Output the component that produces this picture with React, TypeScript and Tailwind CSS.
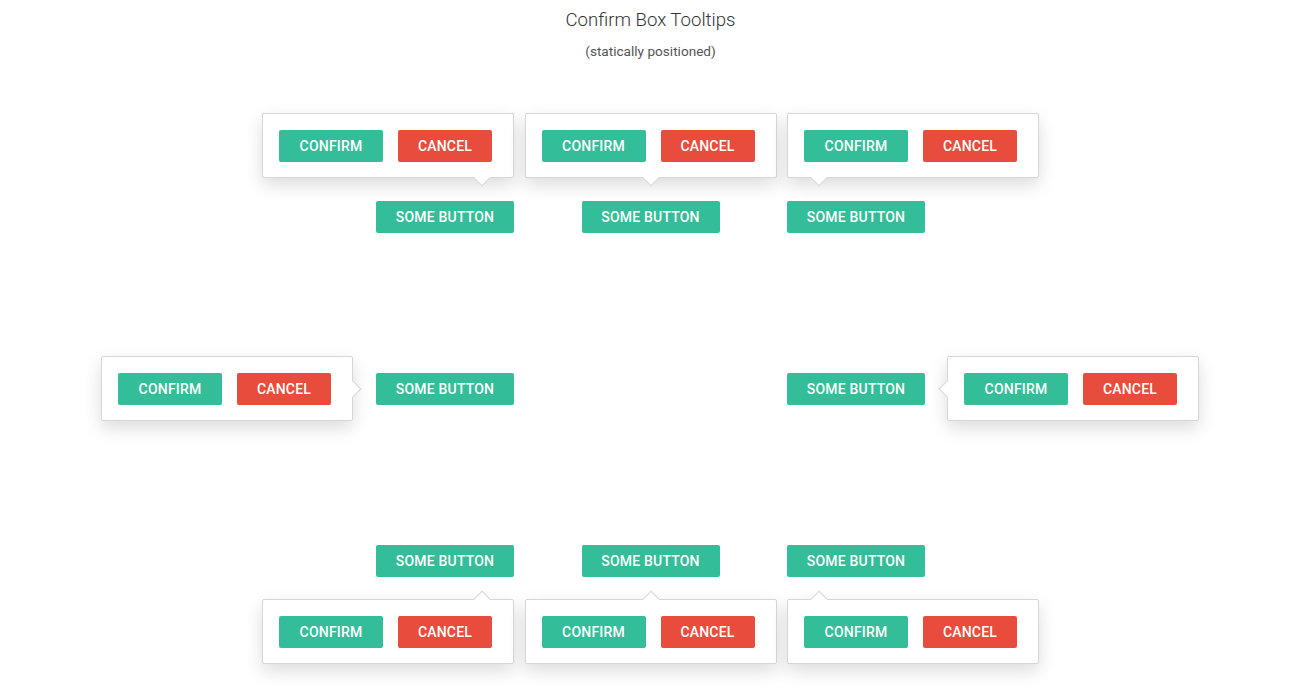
import React from "react";

type Placement =
  | "top-end"
  | "top"
  | "top-start"
  | "left"
  | "right"
  | "bottom-end"
  | "bottom"
  | "bottom-start";

const boxPos: Record<Placement, string> = {
  "top-end": "bottom-[calc(100%+23px)] right-0",
  top: "bottom-[calc(100%+23px)] left-1/2 -translate-x-1/2",
  "top-start": "bottom-[calc(100%+23px)] left-0",
  left: "right-[calc(100%+23px)] top-[-17px]",
  right: "left-[calc(100%+22px)] top-[-17px]",
  "bottom-end": "top-[calc(100%+22px)] right-0",
  bottom: "top-[calc(100%+22px)] left-1/2 -translate-x-1/2",
  "bottom-start": "top-[calc(100%+22px)] left-0",
};

const arrowPos: Record<Placement, string> = {
  "top-end": "-bottom-[7px] right-[25px] border-r border-b",
  top: "-bottom-[7px] left-1/2 -ml-[6px] border-r border-b",
  "top-start": "-bottom-[7px] left-[25px] border-r border-b",
  left: "-right-[7px] top-1/2 -mt-[6px] border-t border-r",
  right: "-left-[7px] top-1/2 -mt-[6px] border-b border-l",
  "bottom-end": "-top-[7px] right-[25px] border-l border-t",
  bottom: "-top-[7px] left-1/2 -ml-[6px] border-l border-t",
  "bottom-start": "-top-[7px] left-[25px] border-l border-t",
};

const Confirm = ({ placement }: { placement: Placement }) => (
  <div
    className={`absolute z-10 w-[252px] bg-white border border-[#d6d6d6] rounded-[2px] pt-4 pb-[15px] px-4 shadow-[0_7px_18px_rgba(0,0,0,0.14)] ${boxPos[placement]}`}
  >
    <span
      className={`absolute w-3 h-3 bg-white border-[#d6d6d6] rotate-45 ${arrowPos[placement]}`}
    />
    <div className="relative flex gap-[15px]">
      <button className="w-[104px] h-8 rounded-[2px] bg-[#33bd98] text-white text-sm font-medium tracking-[0.2px]">
        CONFIRM
      </button>
      <button className="w-[94px] h-8 rounded-[2px] bg-[#e74c3c] text-white text-sm font-medium tracking-[0.2px]">
        CANCEL
      </button>
    </div>
  </div>
);

const Cell = ({ placement }: { placement?: Placement }) => {
  if (!placement) return <div />;
  return (
    <div className="relative">
      <Confirm placement={placement} />
      <button className="w-full h-8 rounded-[2px] bg-[#33bd98] text-white text-sm font-medium tracking-[0.2px]">
        SOME BUTTON
      </button>
    </div>
  );
};

export default function App() {
  return (
    <div className="min-h-screen bg-white text-[#333] pr-[2px] font-['Roboto',sans-serif]">
      <div className="pt-2 text-center">
        <h1 className="text-[18.6px] leading-6 font-light">Confirm Box Tooltips</h1>
        <p className="mt-[10px] text-[13.6px] leading-[18px] text-[#555]">(statically positioned)</p>
      </div>

      <div className="mt-[141px] grid grid-cols-[138px_138px_138px] justify-center gap-x-[67.5px] gap-y-[140px]">
        <Cell placement="top-end" />
        <Cell placement="top" />
        <Cell placement="top-start" />

        <Cell placement="left" />
        <Cell />
        <Cell placement="right" />

        <Cell placement="bottom-end" />
        <Cell placement="bottom" />
        <Cell placement="bottom-start" />
      </div>
    </div>
  );
}
